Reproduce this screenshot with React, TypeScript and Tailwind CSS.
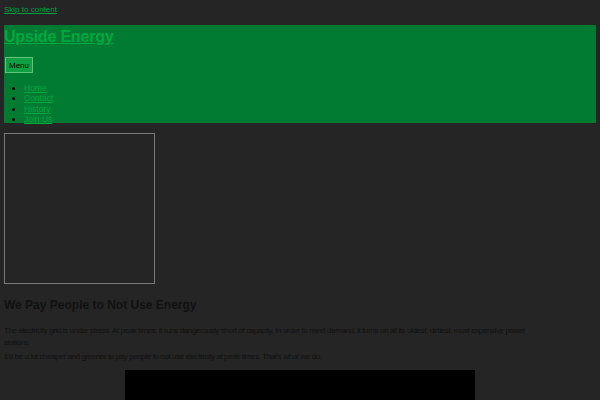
import React from 'react';

const links = ['Home', 'Contact', 'History', 'Join Us'];

const App: React.FC = () => {
    return (
        <div className="min-h-[400px] bg-[#252525] px-1 pt-[4px] overflow-hidden font-['Liberation_Sans',Arial,sans-serif]">
            <a href="#content" className="block text-[8px] leading-[11px] text-[#00a040] underline">
                Skip to content
            </a>
            <header className="mt-[10px] bg-[#017a32] h-[98px] pt-[2px]">
                <a href="#" className="block text-[16px] leading-[19px] font-bold text-[#00a83f] underline tracking-[-0.2px]">
                    Upside Energy
                </a>
                <button className="mt-[11px] ml-[1px] h-[16px] w-[28px] text-[8px] leading-[11px] text-black bg-[#10a043] border border-[#5bc57c]">
                    Menu
                </button>
                <ul className="mt-[8px] pl-[20px] list-disc text-black">
                    {links.map((l) => (
                        <li key={l} className="text-[8.5px] leading-[10.5px]">
                            <a href="#" className="text-[#00a83f] underline">{l}</a>
                        </li>
                    ))}
                </ul>
            </header>
            <div className="mt-[10px] w-[151px] h-[151px] border border-[#7a7a7a]" />
            <main id="content" className="mt-[13px] text-[#111111]">
                <h1 className="text-[12px] leading-[16px] font-bold">We Pay People to Not Use Energy</h1>
                <p className="mt-[12px] text-[8px] leading-[12px] tracking-[-0.4px] pr-[62px]">
                    The electricity grid is under stress. At peak times, it runs dangerously short of capacity. In order to meet demand, it turns on all its oldest, dirtiest, most expensive power stations.
                </p>
                <p className="mt-[2px] text-[8px] leading-[12px] tracking-[-0.4px]">
                    It'd be a lot cheaper and greener to pay people to not use electricity at peak times. That's what we do.
                </p>
                <div className="mt-[7px] mx-auto w-[350px] h-[60px] bg-black" />
            </main>
        </div>
    );
};

export default App;
